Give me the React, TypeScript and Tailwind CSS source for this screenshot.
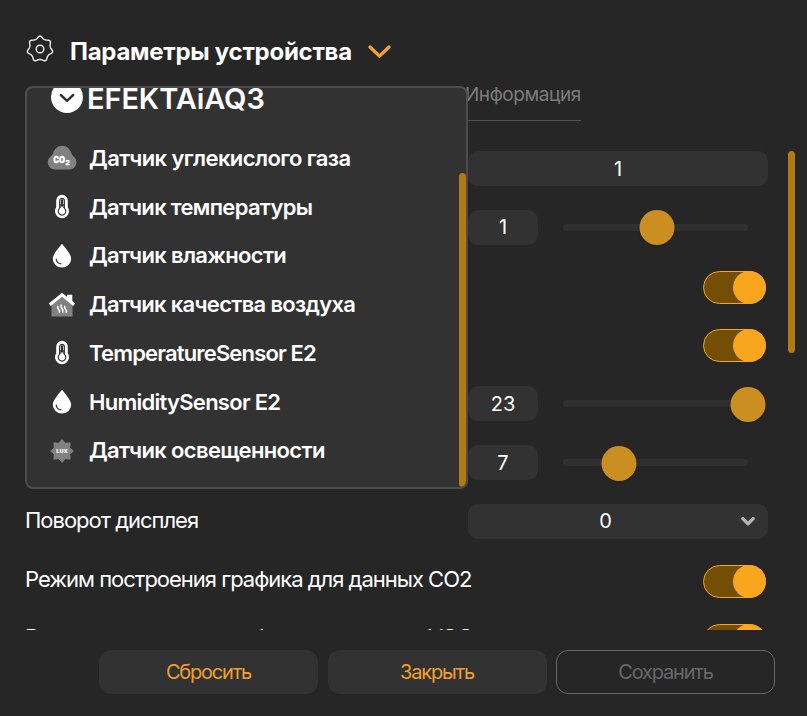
import type { ReactNode } from 'react'

const gearOutline = Array.from({ length: 140 }, (_, i) => {
  const angle = (i / 140) * Math.PI * 2
  const wave = Math.cos(7 * angle)
  const radius = 11.5 + 1.2 * wave + 0.2 * Math.cos(14 * angle)
  return `${(radius * Math.sin(angle)).toFixed(2)},${(-radius * Math.cos(angle)).toFixed(2)}`
}).join(' ')

function GearIcon() {
  return (
    <svg className="mb-1" width="28" height="28" viewBox="-14 -14 28 28" fill="none" stroke="#ededed" strokeWidth="1.4" strokeLinejoin="round">
      <polygon points={gearOutline} />
      <circle r="3.8" />
    </svg>
  )
}

function Co2Icon() {
  return (
    <svg width="30" height="26" viewBox="0 0 30 26">
      <path d="M8 24.5A7.2 7.2 0 0 1 3.6 11.6C5.2 10.2 5.8 9.2 6.2 7.8C7.6 3.6 11 .8 15.2 .8S22.8 3.6 24.2 7.8C24.6 9.2 25.2 10.2 26.6 11.6A7.2 7.2 0 0 1 22 24.5Z" fill="#818181" />
      <text x="6.2" y="18" fontSize="8.5" fontWeight="900" fill="#fff" stroke="#fff" strokeWidth=".3" fontFamily="Inter" textLength="11.8" lengthAdjust="spacingAndGlyphs">CO</text>
      <text x="18.4" y="19.7" fontSize="6.5" fontWeight="900" fill="#fff" stroke="#fff" strokeWidth=".3" fontFamily="Inter">2</text>
    </svg>
  )
}

function ThermometerIcon() {
  return (
    <svg width="30" height="26" viewBox="0 0 30 26">
      <path d="M9.2 6.5a5.8 5.8 0 0 1 11.6 0v6.8a7 7 0 1 1-11.6 0Z" fill="#fff" />
      <path d="M12.6 6.8a2.4 2.4 0 0 1 4.8 0v7.6a3.8 3.8 0 1 1-4.8 0Z" fill="#fff" stroke="#323232" strokeWidth="1.1" />
      <path d="M15 6.4v5" stroke="#323232" strokeWidth="2.4" strokeLinecap="round" />
      <path d="M13.6 10v4M16.4 10v4" stroke="#323232" strokeWidth=".8" />
    </svg>
  )
}

function DropIcon() {
  return (
    <svg width="30" height="26" viewBox="0 0 30 26">
      <path d="M15 .8C16.5 2.8 24.2 11 24.2 15.7a9.2 8.8 0 0 1-18.4 0C5.8 11 13.5 2.8 15 .8Z" fill="#fff" />
      <path d="M9.2 16.2c.3 2.8 2.2 4.3 4.8 4.6" fill="none" stroke="#323232" strokeWidth="1.2" strokeLinecap="round" />
    </svg>
  )
}

function HouseIcon() {
  return (
    <svg width="30" height="26" viewBox="0 0 30 26">
      <path d="M4.5 13L15 4.5 25.5 13v11.5h-21Z" fill="#818181" />
      <path d="M20 2.7h5.3v8.3L20 7Z" fill="#fff" />
      <path d="M2.8 12.8L15 2.8l12.2 10" fill="none" stroke="#fff" strokeWidth="3.2" />
      <path d="M10.8 13.7q-.6 2 .8 3.5t.6 3.8M14.2 12.5q-.6 2 .8 4t.7 4.5M17.8 13.7q-.6 2 .8 3.5t.6 3.8" fill="none" stroke="#fff" strokeWidth="1.6" />
    </svg>
  )
}

function LuxIcon() {
  return (
    <svg width="30" height="26" viewBox="0 0 30 26">
      <path d="M15 1.6L18.2 5.3L23.1 4.9L22.7 9.8L26.4 13L22.7 16.2L23.1 21.1L18.2 20.7L15 24.4L11.8 20.7L6.9 21.1L7.3 16.2L3.6 13L7.3 9.8L6.9 4.9L11.8 5.3Z" fill="#818181" stroke="#818181" strokeLinejoin="round" />
      <text x="9.3" y="14.9" fontSize="5.2" fontWeight="900" fill="#fff" fontFamily="Inter" textLength="11.5" lengthAdjust="spacingAndGlyphs">LUX</text>
    </svg>
  )
}

const sensors: { icon: ReactNode; label: string; tracking: string }[] = [
  { icon: <Co2Icon />, label: 'Датчик углекислого газа', tracking: 'tracking-[-0.6px]' },
  { icon: <ThermometerIcon />, label: 'Датчик температуры', tracking: 'tracking-[-0.69px]' },
  { icon: <DropIcon />, label: 'Датчик влажности', tracking: 'tracking-[-0.67px]' },
  { icon: <HouseIcon />, label: 'Датчик качества воздуха', tracking: 'tracking-[-0.7px]' },
  { icon: <ThermometerIcon />, label: 'TemperatureSensor E2', tracking: 'tracking-[-0.83px]' },
  { icon: <DropIcon />, label: 'HumiditySensor E2', tracking: 'tracking-[-0.73px]' },
  { icon: <LuxIcon />, label: 'Датчик освещенности', tracking: 'tracking-[-0.65px]' },
]

function SensorMenu() {
  return (
    <div className="absolute left-[25px] top-[86px] h-[403px] w-[443px] overflow-hidden rounded-lg border-2 border-[#4d4d4d] bg-[#323232]">
      <div className="mt-[-7px] flex h-8 items-center pl-6">
        <span className="flex size-8 shrink-0 items-center justify-center rounded-full bg-white pt-0.5">
          <svg width="18" height="12" viewBox="0 0 18 12" fill="none" stroke="#323232" strokeWidth="2.4" strokeLinecap="round" strokeLinejoin="round">
            <path d="M2.8 3L9 8.8 15.2 3" />
          </svg>
        </span>
        <span className="ml-1 pt-1 text-[29px] font-semibold tracking-[-0.1px]">EFEKTAiAQ3</span>
      </div>
      <div className="mt-[21px] flex flex-col">
        {sensors.map((s) => (
          <div key={s.label} className="flex h-[48.75px] items-center pl-5">
            {s.icon}
            <span className={`ml-3 whitespace-nowrap text-[22px] font-semibold ${s.tracking}`}>{s.label}</span>
          </div>
        ))}
      </div>
      <div className="absolute bottom-0 right-0 h-[314px] w-[7px] rounded-full bg-[#b17a12]" />
    </div>
  )
}

function Row({ label, children }: { label?: string; children: ReactNode }) {
  return (
    <div className="flex h-[35px] shrink-0 items-center justify-between">
      <span className="whitespace-nowrap pb-[2.4px] text-[22px] tracking-[-1.01px]">{label}</span>
      {children}
    </div>
  )
}

function Toggle() {
  return (
    <div className="relative top-px mr-0.5 flex h-[33px] w-[63px] items-center justify-end rounded-full border border-[#f9a61f] bg-[#754e06]">
      <div className="-mr-px size-[33px] shrink-0 rounded-full bg-[#f9a61f]" />
    </div>
  )
}

function Slider({ value, percent }: { value: string; percent: number }) {
  return (
    <div className="flex h-[35px] w-[300px] items-center">
      <div className="flex h-[35px] w-[70px] items-center justify-center rounded-[10px] bg-[#323232] text-[20px]">{value}</div>
      <div className="relative ml-[25px] h-[7px] w-[185px] rounded-full bg-[#303030]">
        <div className="absolute top-[-13.5px] size-[35px] -translate-x-1/2 rounded-full bg-[#cb8e20] shadow-sm" style={{ left: `${percent}%` }} />
      </div>
    </div>
  )
}

export default function App() {
  return (
    <div className="relative flex h-[716px] w-[807px] flex-col overflow-hidden bg-[#262626] font-['Inter','Liberation_Sans',sans-serif] text-white">
      <header className="mt-[35px] flex h-8 items-center pl-[26px]">
        <GearIcon />
        <h1 className="ml-4 w-[282px] whitespace-nowrap pt-0.5 text-[24px] font-bold tracking-[-0.27px]">Параметры устройства</h1>
        <svg className="ml-4 mt-0.5" width="24" height="16" viewBox="0 0 24 16" fill="none" stroke="#f9a61f" strokeWidth="3.2" strokeLinecap="round" strokeLinejoin="round">
          <path d="M2 3l9.5 9.2L21 3" />
        </svg>
      </header>

      <nav className="ml-[450px] mt-[13px] flex h-[41px] w-[131px] items-start justify-end border-b border-[#525252]">
        <span className="text-[19px] leading-[30px] tracking-[-0.4px] text-[#7c7c7c]">Информация</span>
      </nav>

      <div className="mt-[30px] flex h-[479px] justify-between pl-[25px] pr-3">
        <div className="flex w-[743px] flex-col gap-[23.82px] overflow-hidden">
          <Row>
            <div className="flex h-[35px] w-[300px] items-center justify-center rounded-[10px] bg-[#323232] text-[20px]">1</div>
          </Row>
          <Row><Slider value="1" percent={50.8} /></Row>
          <Row><Toggle /></Row>
          <Row><Toggle /></Row>
          <Row><Slider value="23" percent={99.8} /></Row>
          <Row><Slider value="7" percent={30.3} /></Row>
          <Row label="Поворот дисплея">
            <div className="flex h-[35px] w-[300px] items-center rounded-[10px] bg-[#323232] pr-3">
              <span className="flex-1 pl-[3px] text-center text-[20px]">0</span>
              <svg width="16" height="12" viewBox="0 0 16 12" fill="none" stroke="#b4b4b4" strokeWidth="3.4" strokeLinecap="round" strokeLinejoin="round">
                <path d="M2.8 3.6L8 8.8 13.2 3.6" />
              </svg>
            </div>
          </Row>
          <Row label="Режим построения графика для данных CO2"><Toggle /></Row>
          <Row label="Режим построения графика для данных VOC"><Toggle /></Row>
        </div>
        <div className="h-[202px] w-[7px] rounded-full bg-[#b17a12]" />
      </div>

      <footer className="mt-5 flex gap-[9.5px] pl-[99px] text-[20px] tracking-[-1.2px]">
        <button className="h-11 w-[219px] rounded-[12px] bg-[#323232] text-[#f0a02c]">Сбросить</button>
        <button className="h-11 w-[219px] rounded-[12px] bg-[#323232] text-[#f0a02c]">Закрыть</button>
        <button className="h-11 w-[219px] rounded-[12px] border border-[#686868] text-[#686868]">Сохранить</button>
      </footer>

      <SensorMenu />
    </div>
  )
}
